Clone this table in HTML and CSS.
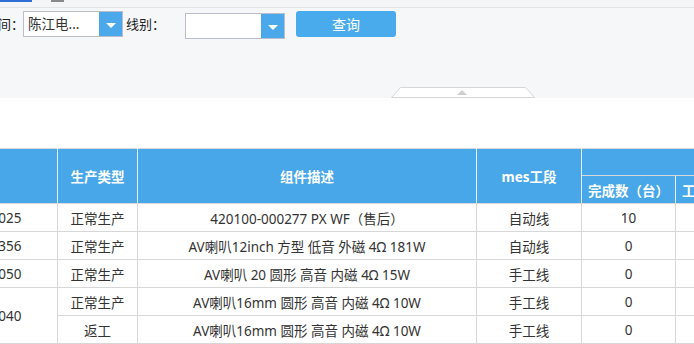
FILE: index.html
```html
<!DOCTYPE html>
<html lang="zh-CN">
<head>
    <meta charset="UTF-8">
    <title>生产完成统计</title>
    <link rel="stylesheet" href="styles.css">
</head>
<body>
    <div class="topbar">
        <span class="tab-active"></span>
        <span class="tab-icon"></span>
    </div>

    <div class="filter-panel">
        <div class="filter-row">
            <label class="filter-label first">车间：</label>
            <div class="combo">
                <span class="combo-text">陈江电...</span>
                <span class="combo-btn"><i class="caret"></i></span>
            </div>
            <label class="filter-label">线别：</label>
            <div class="combo combo-low">
                <span class="combo-text"></span>
                <span class="combo-btn"><i class="caret"></i></span>
            </div>
            <button class="btn-query" type="button">查询</button>
        </div>
        <svg class="collapse-handle" width="144" height="11" viewBox="0 0 144 11">
            <path d="M0.5 10.5 L9.5 0.5 L134.5 0.5 L143.5 10.5 Z" fill="#fff" stroke="#d6d6d6"/>
            <path d="M66 8 L71 3 L76 8 Z" fill="#cfcfcf"/>
        </svg>
    </div>

    <div class="spacer"></div>

    <div class="grid-wrap">
        <table class="grid">
            <colgroup>
                <col style="width:157px">
                <col style="width:80px">
                <col style="width:339px">
                <col style="width:105px">
                <col style="width:94px">
                <col style="width:94px">
            </colgroup>
            <thead>
                <tr class="head-top">
                    <th rowspan="2">工单号</th>
                    <th rowspan="2">生产类型</th>
                    <th rowspan="2">组件描述</th>
                    <th rowspan="2">mes工段</th>
                    <th colspan="2"></th>
                </tr>
                <tr class="head-sub">
                    <th>完成数（台）</th>
                    <th>工时（小时）</th>
                </tr>
            </thead>
            <tbody>
                <tr>
                    <td>20231100025</td>
                    <td>正常生产</td>
                    <td>420100-000277 PX WF（售后）</td>
                    <td>自动线</td>
                    <td>10</td>
                    <td></td>
                </tr>
                <tr>
                    <td>20231100356</td>
                    <td>正常生产</td>
                    <td>AV喇叭12inch 方型 低音 外磁 4Ω 181W</td>
                    <td>自动线</td>
                    <td>0</td>
                    <td></td>
                </tr>
                <tr>
                    <td>20231100050</td>
                    <td>正常生产</td>
                    <td>AV喇叭 20 圆形 高音 内磁 4Ω 15W</td>
                    <td>手工线</td>
                    <td>0</td>
                    <td></td>
                </tr>
                <tr>
                    <td rowspan="2">20231100040</td>
                    <td>正常生产</td>
                    <td>AV喇叭16mm 圆形 高音 内磁 4Ω 10W</td>
                    <td>手工线</td>
                    <td>0</td>
                    <td></td>
                </tr>
                <tr>
                    <td>返工</td>
                    <td>AV喇叭16mm 圆形 高音 内磁 4Ω 10W</td>
                    <td>手工线</td>
                    <td>0</td>
                    <td></td>
                </tr>
            </tbody>
        </table>
    </div>
</body>
</html>
```

FILE: styles.css
```css
body {
    margin: 0;
    padding: 0;
    font-family: "Noto Sans", "Noto Sans CJK SC", sans-serif;
    font-size: 13px;
    color: #333;
    background: #fff;
    overflow: hidden;
}

.topbar {
    height: 7px;
    background: #f4f5f7;
    border-bottom: 1px solid #e3e4e6;
    display: flex;
    align-items: flex-start;
}

.tab-active {
    width: 32px;
    height: 2px;
    background: #2f6fd6;
}

.tab-icon {
    width: 13px;
    height: 2px;
    margin-left: 19px;
    background: #8a8a8a;
}

.filter-panel {
    position: relative;
    height: 90px;
    background: #f6f7f9;
}

.filter-row {
    display: flex;
    align-items: flex-start;
    padding-top: 3px;
}

.filter-label {
    line-height: 26px;
    color: #222;
}

.filter-label.first {
    margin-left: -15px;
    margin-right: -1px;
}

.combo {
    display: flex;
    width: 100px;
    height: 26px;
    box-sizing: border-box;
    border: 1px solid #b9bdcc;
    background: #fff;
    margin-right: 3px;
}

.combo-low {
    margin-top: 2px;
    margin-left: 20px;
    margin-right: 11px;
}

.combo-text {
    flex: 1;
    padding-left: 4px;
    line-height: 24px;
    font-size: 13.5px;
    color: #333;
}

.combo-btn {
    width: 23px;
    background: #4ba8ea;
    display: flex;
    justify-content: center;
    align-items: center;
}

.caret {
    width: 0;
    height: 0;
    border-left: 5px solid transparent;
    border-right: 5px solid transparent;
    border-top: 5px solid #fff;
    margin-top: 2px;
}

.btn-query {
    width: 100px;
    height: 26px;
    border: none;
    border-radius: 3px;
    background: #4aabec;
    color: #fff;
    font-family: "Noto Sans CJK SC", sans-serif;
    font-size: 14px;
    padding: 0;
    cursor: pointer;
}

.collapse-handle {
    position: absolute;
    left: 391px;
    bottom: 0;
    display: block;
}

.spacer {
    height: 49px;
    border-top: 1px solid #fff;
}

.grid-wrap {
    width: 694px;
    overflow: hidden;
}

.grid {
    margin-left: -100px;
    border-collapse: collapse;
    table-layout: fixed;
    width: 869px;
    font-size: 13.5px;
}

.grid th,
.grid td {
    border: 1px solid #d7d7d7;
    text-align: center;
    white-space: nowrap;
    overflow: hidden;
    padding: 0;
}

.grid th {
    background: #48a7e8;
    color: #fff;
    font-weight: bold;
    border-color: #d7d7d7 #e6f2fc;
}

.grid .head-top th {
    height: 26px;
}

.grid .head-sub th {
    height: 27px;
}

.grid td {
    height: 27px;
}
```
